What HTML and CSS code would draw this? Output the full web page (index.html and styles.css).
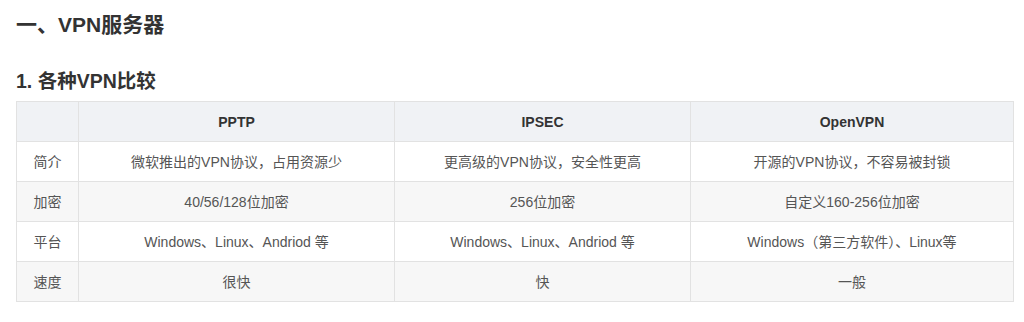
FILE: index.html
```html
<!DOCTYPE html>
<html lang="zh-CN">
<head>
<meta charset="utf-8">
<link rel="stylesheet" href="styles.css">
</head>
<body>
<div class="page">
  <h2 class="title">一、VPN服务器</h2>
  <h3 class="subtitle">1. 各种VPN比较</h3>
  <table class="cmp">
    <colgroup>
      <col class="c0"><col class="c1"><col class="c2"><col class="c3">
    </colgroup>
    <thead>
      <tr><th></th><th>PPTP</th><th>IPSEC</th><th>OpenVPN</th></tr>
    </thead>
    <tbody>
      <tr><td>简介</td><td>微软推出的VPN协议，占用资源少</td><td>更高级的VPN协议，安全性更高</td><td>开源的VPN协议，不容易被封锁</td></tr>
      <tr><td>加密</td><td>40/56/128位加密</td><td>256位加密</td><td>自定义160-256位加密</td></tr>
      <tr><td>平台</td><td>Windows、Linux、Andriod 等</td><td>Windows、Linux、Andriod 等</td><td>Windows（第三方软件）、Linux等</td></tr>
      <tr><td>速度</td><td>很快</td><td>快</td><td>一般</td></tr>
    </tbody>
  </table>
</div>
</body>
</html>
```
FILE: styles.css
```css
html, body {
  margin: 0;
  padding: 0;
  background: #ffffff;
}
body {
  font-family: "Liberation Sans", Arial, "Noto Sans CJK SC", sans-serif;
  color: #555;
}
.page {
  padding: 0 11px 0 16px;
}
.title {
  margin: 0;
  padding-top: 10px;
  height: 30px;
  line-height: 30px;
  font-size: 21px;
  font-weight: bold;
  color: #333;
}
.subtitle {
  margin: 0;
  padding-top: 28px;
  height: 33px;
  line-height: 26px;
  font-size: 19.5px;
  font-weight: bold;
  color: #333;
}
.cmp {
  margin-top: 0;
  width: 997px;
  border-collapse: collapse;
  table-layout: fixed;
  font-size: 14px;
}
.c0 { width: 62px; }
.c1 { width: 316px; }
.c2 { width: 296px; }
.c3 { width: 323px; }
.cmp th, .cmp td {
  border: 1px solid #e2e2e2;
  text-align: center;
  height: 39px;
  padding: 0 8px;
  line-height: 20px;
}
.cmp th {
  background: #f0f2f5;
  color: #333;
  font-weight: bold;
}
.cmp tbody tr:nth-child(odd) td { background: #fff; }
.cmp tbody tr:nth-child(even) td { background: #f7f7f7; }
```
